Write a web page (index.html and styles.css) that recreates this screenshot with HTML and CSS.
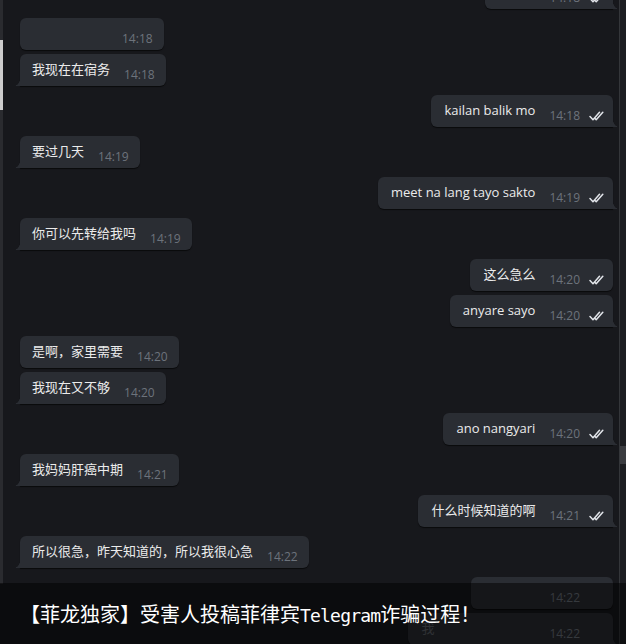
FILE: index.html
```html
<!DOCTYPE html>
<html lang="zh-CN">
<head>
  <meta charset="UTF-8" />
  <meta name="viewport" content="width=device-width, initial-scale=1.0"/>
  <title>Telegram</title>
  <link rel="stylesheet" href="styles.css">
</head>
<body>
  <div class="screen">
    <div class="side-left"><div class="thumb"></div></div>

    <div class="chat">
      <div class="row out">
        <div class="bubble tail"><span class="text blank b37"></span><span class="time">14:18</span><svg class="check" viewBox="0 0 17 10"><path d="M1 5.5 L4 8.8 L10.5 1.2 M5.6 7 L7.2 8.8 L13.8 1.2"/></svg></div>
      </div>

      <div class="row in">
        <div class="bubble"><span class="text blank b76"></span><span class="time">14:18</span></div>
      </div>
      <div class="row in cont">
        <div class="bubble tail"><span class="text">我现在在宿务</span><span class="time">14:18</span></div>
      </div>

      <div class="row out">
        <div class="bubble tail"><span class="text">kailan balik mo</span><span class="time">14:18</span><svg class="check" viewBox="0 0 17 10"><path d="M1 5.5 L4 8.8 L10.5 1.2 M5.6 7 L7.2 8.8 L13.8 1.2"/></svg></div>
      </div>

      <div class="row in">
        <div class="bubble tail"><span class="text">要过几天</span><span class="time">14:19</span></div>
      </div>

      <div class="row out">
        <div class="bubble tail"><span class="text">meet na lang tayo sakto</span><span class="time">14:19</span><svg class="check" viewBox="0 0 17 10"><path d="M1 5.5 L4 8.8 L10.5 1.2 M5.6 7 L7.2 8.8 L13.8 1.2"/></svg></div>
      </div>

      <div class="row in">
        <div class="bubble tail"><span class="text">你可以先转给我吗</span><span class="time">14:19</span></div>
      </div>

      <div class="row out">
        <div class="bubble"><span class="text">这么急么</span><span class="time">14:20</span><svg class="check" viewBox="0 0 17 10"><path d="M1 5.5 L4 8.8 L10.5 1.2 M5.6 7 L7.2 8.8 L13.8 1.2"/></svg></div>
      </div>
      <div class="row out cont">
        <div class="bubble tail"><span class="text">anyare sayo</span><span class="time">14:20</span><svg class="check" viewBox="0 0 17 10"><path d="M1 5.5 L4 8.8 L10.5 1.2 M5.6 7 L7.2 8.8 L13.8 1.2"/></svg></div>
      </div>

      <div class="row in">
        <div class="bubble"><span class="text">是啊，家里需要</span><span class="time">14:20</span></div>
      </div>
      <div class="row in cont">
        <div class="bubble tail"><span class="text">我现在又不够</span><span class="time">14:20</span></div>
      </div>

      <div class="row out">
        <div class="bubble tail"><span class="text">ano nangyari</span><span class="time">14:20</span><svg class="check" viewBox="0 0 17 10"><path d="M1 5.5 L4 8.8 L10.5 1.2 M5.6 7 L7.2 8.8 L13.8 1.2"/></svg></div>
      </div>

      <div class="row in">
        <div class="bubble tail"><span class="text">我妈妈肝癌中期</span><span class="time">14:21</span></div>
      </div>

      <div class="row out">
        <div class="bubble tail"><span class="text">什么时候知道的啊</span><span class="time">14:21</span><svg class="check" viewBox="0 0 17 10"><path d="M1 5.5 L4 8.8 L10.5 1.2 M5.6 7 L7.2 8.8 L13.8 1.2"/></svg></div>
      </div>

      <div class="row in">
        <div class="bubble tail"><span class="text">所以很急，昨天知道的，所以我很心急</span><span class="time">14:22</span></div>
      </div>

      <div class="row out">
        <div class="bubble nocheck"><span class="text blank b51"></span><span class="time">14:22</span></div>
      </div>
      <div class="row out cont">
        <div class="bubble nocheck tail"><span class="text faint b114">我</span><span class="time">14:22</span></div>
      </div>
    </div>

    <div class="side-right"><div class="thumb"></div></div>

    <div class="caption">【菲龙独家】受害人投稿菲律宾<span class="latin">Telegram</span>诈骗过程！</div>
  </div>
</body>
</html>
```

FILE: styles.css
```css
body {
  margin: 0;
  background-color: #17181c;
  font-family: "Open Sans", "Noto Sans CJK SC", sans-serif;
}

.screen {
  position: relative;
  display: flex;
  width: 626px;
  height: 644px;
  overflow: hidden;
}

/* scroll strips on both sides */
.side-left {
  width: 3px;
  height: 584px;
  background-color: #2a2b2f;
}

.side-left .thumb {
  margin-top: 40px;
  height: 70px;
  background-color: #cdcdcd;
}

.side-right {
  width: 6px;
  border-left: 1px solid #34363a;
  background-color: #1d1e22;
}

.side-right .thumb {
  margin-top: 446px;
  height: 18px;
  background-color: #3b3c40;
}

.chat {
  flex: 1;
  display: flex;
  flex-direction: column;
  margin-top: -23px;
}

.row {
  display: flex;
  margin-top: 9px;
}

.row.cont {
  margin-top: 4px;
}

.row:first-child {
  margin-top: 0;
}

.row.in {
  justify-content: flex-start;
  padding-left: 17px;
}

.row.out {
  justify-content: flex-end;
  padding-right: 6px;
}

.bubble {
  position: relative;
  display: flex;
  align-items: flex-end;
  box-sizing: border-box;
  height: 32px;
  border-radius: 6px;
  background-color: #2a2d33;
  box-shadow: 0 1px 1px rgba(0, 0, 0, 0.6);
}

.in .bubble {
  padding: 0 11px 0 12px;
}

.out .bubble {
  padding: 0 7px 0 13px;
}

.out .bubble.nocheck {
  padding-right: 33px;
}

.in .bubble.tail {
  border-bottom-left-radius: 0;
}

.out .bubble.tail {
  border-bottom-right-radius: 0;
}

.bubble.tail::before {
  content: "";
  position: absolute;
  bottom: 0;
  width: 6px;
  height: 7px;
}

.in .bubble.tail::before {
  left: -6px;
  background: radial-gradient(6px 7px at 0 0, transparent 96%, #2a2d33 100%);
}

.out .bubble.tail::before {
  right: -6px;
  background: radial-gradient(6px 7px at 100% 0, transparent 96%, #2a2d33 100%);
}

.text {
  margin-bottom: 8px;
  font-size: 13px;
  line-height: 18px;
  color: #ebebeb;
  white-space: nowrap;
}

.blank {
  display: inline-block;
  height: 18px;
}

.b37 { width: 37px; }
.b51 { width: 51px; }
.b76 { width: 76px; }

.faint {
  color: #5d6168;
}

.b114 {
  display: inline-block;
  width: 114px;
}

.time {
  margin-left: 14px;
  margin-bottom: 4px;
  font-size: 12px;
  line-height: 14px;
  color: #6d737c;
}

.check {
  width: 17px;
  height: 10px;
  margin-left: 9px;
  margin-bottom: 6px;
  fill: none;
  stroke: #e2e5ea;
  stroke-width: 1.5;
  stroke-linecap: round;
  stroke-linejoin: round;
}

.caption {
  position: absolute;
  left: 0;
  right: 0;
  bottom: 0;
  height: 61px;
  padding-left: 20px;
  background-color: rgba(0, 0, 0, 0.5);
  color: #ffffff;
  font-family: "Noto Sans CJK SC", sans-serif;
  font-size: 20px;
  line-height: 61px;
  white-space: nowrap;
}

.caption .latin {
  font-family: "DejaVu Sans Mono", monospace;
  font-size: 18px;
  letter-spacing: -0.8px;
}
```
